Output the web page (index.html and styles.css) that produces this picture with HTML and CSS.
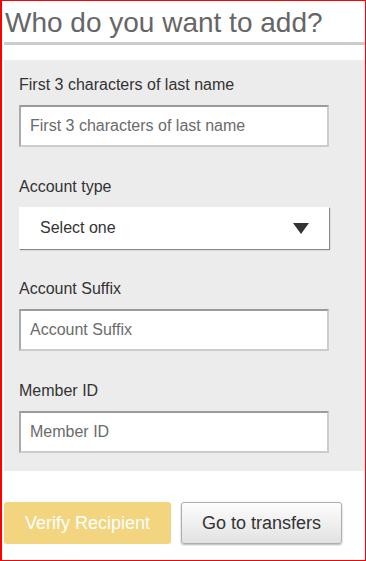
FILE: index.html
```html
<!DOCTYPE html>
<html lang="en">
<head>
    <meta charset="UTF-8">
    <meta name="viewport" content="width=device-width, initial-scale=1.0">
    <title>Add recipient</title>
    <link rel="stylesheet" href="styles.css">
</head>
<body>
    <div class="page">
        <h1 class="page-title">Who do you want to add?</h1>

        <form class="recipient-form">
            <div class="field">
                <label class="field-label" for="lastName">First 3 characters of last name</label>
                <input class="field-input" id="lastName" type="text" placeholder="First 3 characters of last name">
            </div>

            <div class="field">
                <label class="field-label" for="accountType">Account type</label>
                <div class="select-box" id="accountType">
                    <span>Select one</span>
                    <span class="select-arrow"></span>
                </div>
            </div>

            <div class="field">
                <label class="field-label" for="suffix">Account Suffix</label>
                <input class="field-input" id="suffix" type="text" placeholder="Account Suffix">
            </div>

            <div class="field">
                <label class="field-label" for="memberId">Member ID</label>
                <input class="field-input" id="memberId" type="text" placeholder="Member ID">
            </div>
        </form>

        <div class="actions">
            <button class="btn btn-verify" type="button">Verify Recipient</button>
            <button class="btn btn-transfers" type="button">Go to transfers</button>
        </div>
    </div>
</body>
</html>
```

FILE: styles.css
```css
* {
    box-sizing: border-box;
}

body {
    margin: 0;
    font-family: 'Liberation Sans', Arial, sans-serif;
    background: #fff;
}

.page {
    height: 100vh;
    border: 1px solid #ff0000;
    border-left-width: 2px;
    padding-left: 2px;
}

.page-title {
    margin: 0;
    padding: 6px 0 4px 1px;
    font-size: 28px;
    font-weight: normal;
    line-height: 31px;
    color: #666;
    border-bottom: 3px solid #ccc;
}

.recipient-form {
    margin-top: 15px;
    padding: 16px 35px 18px 15px;
    background-color: #ececec;
    display: flex;
    flex-direction: column;
    gap: 31px;
}

.field-label {
    display: block;
    margin-bottom: 11px;
    font-size: 16px;
    line-height: 18px;
    color: #333;
}

.field-input {
    display: block;
    width: 310px;
    height: 42px;
    padding: 0 9px;
    font-family: inherit;
    font-size: 16px;
    color: #333;
    background: #fff;
    border: 2px solid #ccc;
    border-top-color: #9a9a9a;
    border-left-color: #aaa;
}

.field-input::placeholder {
    color: #6b6b6b;
}

.select-box {
    width: 310px;
    height: 42px;
    padding: 0 20px 0 21px;
    display: flex;
    align-items: center;
    justify-content: space-between;
    font-size: 16px;
    color: #333;
    background: #fff;
    box-shadow: 1px 1px 1px #888;
}

.select-arrow {
    width: 0;
    height: 0;
    border-left: 8px solid transparent;
    border-right: 8px solid transparent;
    border-top: 11px solid #333;
}

.actions {
    margin-top: 31px;
    display: flex;
    gap: 10px;
}

.btn {
    height: 42px;
    padding: 0;
    font-family: inherit;
    font-size: 18px;
    white-space: nowrap;
    border-radius: 3px;
    cursor: pointer;
}

.btn-verify {
    width: 167px;
    color: #fff;
    background-color: #f3d580;
    border: none;
}

.btn-transfers {
    width: 161px;
    color: #333;
    background: linear-gradient(#fdfdfd, #e2e2e2);
    border: 1px solid #adadad;
    box-shadow: 0 1px 2px rgba(0, 0, 0, 0.3);
}
```
